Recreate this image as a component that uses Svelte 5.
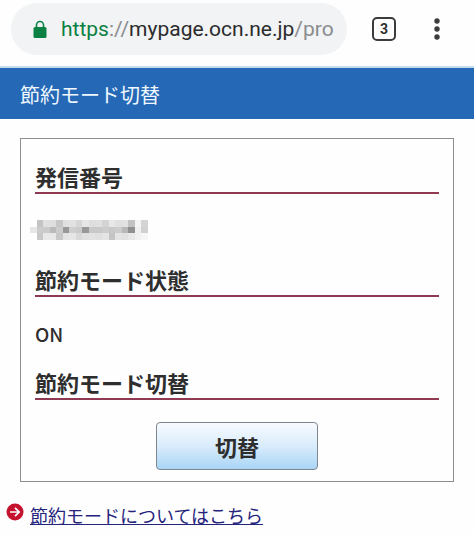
<script>
    let tabCount = 3
    let mode = 'ON'

    // grey levels of the masked phone number, row by row
    const mask = [
        ['ff', 'c4', 'e0', 'de', 'c6', 'e0', 'e2', 'd6', 'e6', 'de', 'e0', 'd4', 'e8', 'e0', 'e2', 'c2', 'f4', 'd4'],
        ['e6', 'cc', 'ca', 'ba', 'cc', '98', 'ce', 'ca', '98', 'c8', 'c8', 'cc', 'c8', 'cc', 'b8', '90', 'f0', 'd0'],
        ['ff', 'c8', 'e8', 'e8', 'c8', 'e4', 'e6', 'd8', 'e0', 'e2', 'e0', 'e4', 'c4', 'e4', 'e2', 'e8', 'f0', 'f6']
    ]

    function toggle() {
        mode = mode === 'ON' ? 'OFF' : 'ON'
    }
</script>

<div class="toolbar">
    <button class="address" type="button">
        <svg class="lock" viewBox="0 0 14 19" aria-hidden="true">
            <path d="M3.5 8V5a3.5 3.5 0 0 1 7 0v3" fill="none" stroke="#0b8043" stroke-width="1.6" />
            <rect x="0.5" y="7" width="13" height="11" rx="1.5" fill="#0b8043" />
        </svg>
        <span class="url"><span class="scheme">https</span><span class="dim">://</span>mypage.ocn.ne.jp<span class="dim">/proc</span></span>
    </button>
    <button class="tabs" type="button" aria-label="tabs">{tabCount}</button>
    <button class="menu" type="button" aria-label="menu">
        <svg viewBox="0 0 6 22" aria-hidden="true">
            <circle cx="3" cy="3" r="2.7" />
            <circle cx="3" cy="11" r="2.7" />
            <circle cx="3" cy="19" r="2.7" />
        </svg>
    </button>
</div>

<h1>節約モード切替</h1>

<main>
    <h2>発信番号</h2>
    <p>
        <svg class="mask" viewBox="0 0 18 3" preserveAspectRatio="none" shape-rendering="crispEdges" aria-hidden="true">
            {#each mask as row, y}
                {#each row as level, x}
                    <rect {x} {y} width="1" height="1" fill="#{level}{level}{level}" />
                {/each}
            {/each}
        </svg>
    </p>
    <h2>節約モード状態</h2>
    <p>{mode}</p>
    <h2>節約モード切替</h2>
    <button class="switch" type="button" on:click={toggle}>切替</button>
</main>

<div class="more">
    <svg viewBox="0 0 18 18" aria-hidden="true">
        <circle cx="9" cy="9" r="8.5" fill="#c4122f" />
        <path d="M4 9h9M9 4.8L13.2 9L9 13.2" fill="none" stroke="#fff" stroke-width="1.7" />
    </svg>
    <a href="#about">節約モードについてはこちら</a>
</div>

<style>
    :global(body) {
        margin: 0;
        background: #fefefe;
        color: #2e2e2e;
        font-family: Roboto, "Noto Sans CJK JP", sans-serif;
    }

    button {
        padding: 0;
        border: none;
        background: none;
        color: inherit;
        font-family: inherit;
        cursor: pointer;
    }

    .toolbar {
        display: flex;
        align-items: center;
        padding: 3px 34px 11px 11px;
        border-bottom: 2px solid #c3dbef;
    }

    .address {
        display: flex;
        flex: 1;
        align-items: center;
        gap: 14px;
        min-width: 0;
        height: 52px;
        padding: 0 13px 0 22px;
        border-radius: 26px;
        background: #f1f3f4;
    }

    .lock {
        flex: none;
        width: 14px;
        height: 19px;
    }

    .url {
        flex: 1;
        overflow: hidden;
        color: #2b2b2d;
        font-size: 21px;
        line-height: 30px;
        text-align: left;
        white-space: nowrap;
    }

    .scheme {
        color: #0b8043;
    }

    .dim {
        color: #8a8c8f;
    }

    .tabs {
        box-sizing: border-box;
        width: 24px;
        height: 24px;
        margin: 0 38px 0 25px;
        border: 2px solid #3c3c3e;
        border-radius: 5px;
        font-size: 14px;
        font-weight: bold;
        line-height: 20px;
    }

    .menu {
        width: 6px;
        height: 22px;
    }

    .menu svg {
        display: block;
        fill: #3c3c3e;
    }

    h1 {
        margin: 0;
        padding: 12px 20px 9px;
        background: #2468b6;
        color: #f0f8ff;
        font-family: "Noto Sans CJK JP", sans-serif;
        font-size: 20px;
        font-weight: normal;
        line-height: 30px;
    }

    main {
        margin: 19px 20px 0;
        padding: 23px 14px 11px;
        border: 1px solid #8b8d90;
    }

    h2 {
        margin: 0;
        padding-bottom: 2px;
        border-bottom: 2px solid #8f3a52;
        font-family: "Noto Sans CJK JP", sans-serif;
        font-size: 22px;
        font-weight: bold;
        line-height: 28px;
    }

    p {
        height: 28px;
        margin: 22px 0 21px;
        font-family: "Noto Sans CJK JP", sans-serif;
        font-size: 19px;
        font-weight: 500;
        line-height: 30px;
    }

    .mask {
        display: block;
        width: 118px;
        height: 20px;
        margin-left: -5px;
        padding: 4px 0;
    }

    .switch {
        display: block;
        box-sizing: border-box;
        width: 162px;
        height: 48px;
        margin: 22px auto 0;
        border: 1px solid #7e8790;
        border-radius: 4px;
        background: linear-gradient(#f8fbff, #d9ecfb 50%, #a9d5f6);
        font-family: "Noto Sans CJK JP", sans-serif;
        font-size: 22px;
        font-weight: bold;
    }

    .more {
        display: flex;
        align-items: flex-start;
        gap: 6px;
        padding: 21px 6px 0;
    }

    .more svg {
        width: 18px;
        height: 18px;
    }

    .more a {
        color: #25247c;
        font-family: "Noto Sans CJK JP", sans-serif;
        font-size: 18px;
        line-height: 24px;
    }
</style>
